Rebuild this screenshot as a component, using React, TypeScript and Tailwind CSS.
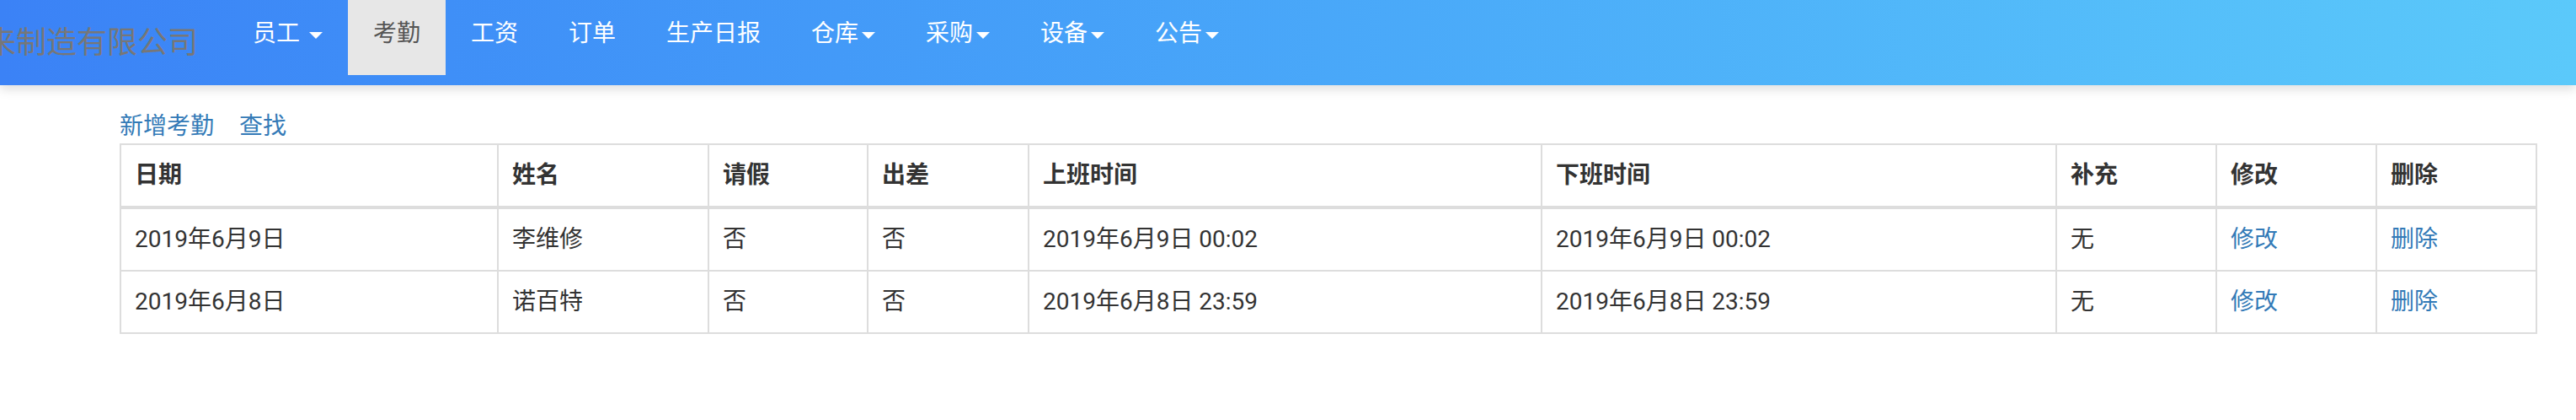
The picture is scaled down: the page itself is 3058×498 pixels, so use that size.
const menu = [
  { label: "员工", caret: true, spaced: true },
  { label: "考勤", active: true },
  { label: "工资" },
  { label: "订单" },
  { label: "生产日报" },
  { label: "仓库", caret: true },
  { label: "采购", caret: true },
  { label: "设备", caret: true },
  { label: "公告", caret: true },
];

const columns = [
  { title: "日期", width: "w-[450px]" },
  { title: "姓名", width: "w-[250px]" },
  { title: "请假", width: "w-[189px]" },
  { title: "出差", width: "w-[191px]" },
  { title: "上班时间", width: "w-[609px]" },
  { title: "下班时间", width: "w-[611px]" },
  { title: "补充", width: "w-[190px]" },
  { title: "修改", width: "w-[190px]" },
  { title: "删除", width: "w-[190px]" },
];

const records = [
  {
    date: "2019年6月9日",
    name: "李维修",
    leave: "否",
    trip: "否",
    start: "2019年6月9日 00:02",
    end: "2019年6月9日 00:02",
    extra: "无",
  },
  {
    date: "2019年6月8日",
    name: "诺百特",
    leave: "否",
    trip: "否",
    start: "2019年6月8日 23:59",
    end: "2019年6月8日 23:59",
    extra: "无",
  },
];

const Caret = () => (
  <span className="ml-[4px] inline-block h-0 w-0 border-x-[8px] border-t-[8px] border-x-transparent border-t-white align-middle"></span>
);

const Navbar = () => {
  return (
    <nav className="flex h-[101px] items-start bg-linear-to-r from-[#3b82f6] to-[#5bc9fa] shadow-[0_5px_12px_rgba(0,0,0,0.13)] relative z-10">
      <div className="flex w-[235px] justify-end overflow-hidden pt-[33px]">
        <span className="whitespace-nowrap text-[36px] leading-[36px] text-[#777]">未来制造有限公司</span>
      </div>
      <ul className="ml-[35px] flex">
        {menu.map((item) => (
          <li key={item.label}>
            <a
              className={
                "block h-[89px] whitespace-nowrap px-[30px] pt-[20px] text-[28px] leading-[40px] " +
                (item.active ? "bg-[#e7e7e7] text-[#555]" : "text-white")
              }
            >
              {item.label}
              {item.spaced ? " " : ""}
              {item.caret && <Caret />}
            </a>
          </li>
        ))}
      </ul>
    </nav>
  );
};

const AttendanceTable = () => {
  return (
    <div className="pl-[142px] pt-[29px]">
      <div className="flex h-[40px] text-[28px] leading-[40px] text-[#337ab7]">
        <a>新增考勤</a>
        <a className="ml-[30px]">查找</a>
      </div>
      <table className="w-[2870px] table-fixed border-separate border-spacing-0 text-left text-[28px] leading-[40px] text-[#333]">
        <colgroup>
          {columns.map((c) => (
            <col key={c.title} className={c.width} />
          ))}
        </colgroup>
        <thead>
          <tr>
            {columns.map((c, i) => (
              <th
                key={c.title}
                className={
                  "border-t-2 border-r-2 border-b-4 border-[#ddd] p-[16px] font-bold " +
                  (i === 0 ? "border-l-2" : "")
                }
              >
                {c.title}
              </th>
            ))}
          </tr>
        </thead>
        <tbody>
          {records.map((r) => (
            <tr key={r.date}>
              <td className="border-x-2 border-b-2 border-[#ddd] p-[16px]">{r.date}</td>
              <td className="border-r-2 border-b-2 border-[#ddd] p-[16px]">{r.name}</td>
              <td className="border-r-2 border-b-2 border-[#ddd] p-[16px]">{r.leave}</td>
              <td className="border-r-2 border-b-2 border-[#ddd] p-[16px]">{r.trip}</td>
              <td className="border-r-2 border-b-2 border-[#ddd] p-[16px]">{r.start}</td>
              <td className="border-r-2 border-b-2 border-[#ddd] p-[16px]">{r.end}</td>
              <td className="border-r-2 border-b-2 border-[#ddd] p-[16px]">{r.extra}</td>
              <td className="border-r-2 border-b-2 border-[#ddd] p-[16px] text-[#337ab7]">修改</td>
              <td className="border-r-2 border-b-2 border-[#ddd] p-[16px] text-[#337ab7]">删除</td>
            </tr>
          ))}
        </tbody>
      </table>
    </div>
  );
};

export default function App() {
  return (
    <div className="min-h-[498px] bg-white font-['Roboto','Noto_Sans_CJK_SC',sans-serif]">
      <Navbar />
      <AttendanceTable />
    </div>
  );
}
